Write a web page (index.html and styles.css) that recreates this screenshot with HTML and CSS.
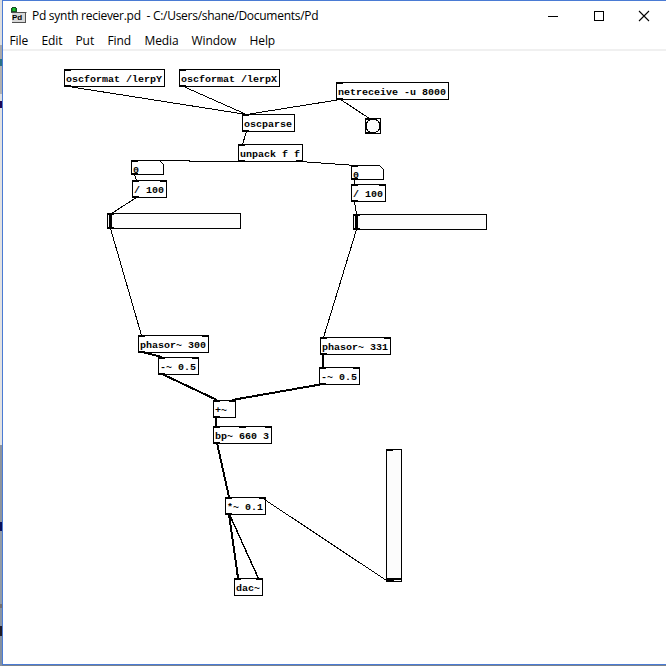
FILE: index.html
```
<!DOCTYPE html>
<html lang="en">
<head>
<meta charset="utf-8">
<title>Pd synth reciever.pd</title>
<link rel="stylesheet" href="styles.css">
<script src="patch.js" defer></script>
</head>
<body>
<div class="desktop"></div>
<main class="window">
  <header class="titlebar">
    <svg class="app-icon" width="16" height="17" viewBox="0 0 16 17">
      <rect x="1" y="5" width="14" height="11" fill="#d8d8d8"/>
      <path d="M1 0h4v1h1v4H0V1h1z" fill="#174b22"/>
      <rect x="1.5" y="1" width="3" height="3" fill="#18c52c"/>
      <path d="M0 5.500h15.500M14.500 5v11M1 15.500h14" stroke="#505050" fill="none"/>
      <text class="icon-text" x="1" y="13">Pd</text>
    </svg>
    <h1 class="title">Pd synth reciever.pd&nbsp; - C:/Users/shane/Documents/Pd</h1>
    <div class="controls">
      <svg width="12" height="12"><path d="M1 6.500h10"/></svg>
      <svg width="12" height="12"><path d="M1.500 1.500h9v9h-9z"/></svg>
      <svg class="close" width="12" height="12"><path d="M1 1L11 11M11 1L1 11"/></svg>
    </div>
  </header>
  <nav class="menu">
    <span class="m-file">File</span><span class="m-edit">Edit</span><span class="m-put">Put</span><span class="m-find">Find</span><span class="m-media">Media</span><span class="m-window">Window</span><span>Help</span>
  </nav>
  <svg class="patch" id="patch" width="663" height="613" viewBox="3 51 663 613"></svg>
</main>
</body>
</html>
```
FILE: styles.css
```
* { box-sizing: border-box; }
body {
  margin: 0;
  width: 666px;
  height: 666px;
  overflow: hidden;
  display: flex;
  background: #7b838c;
}
.desktop {
  width: 2px;
  flex: none;
  background: linear-gradient(#dedede 0 45px, #a8a8a8 45px 59px, #2a7186 59px 66px, #b0b0b0 66px 94px, #dedede 94px 101px, #1c0759 101px 108px, #e2e2e2 108px 445px, #8d949d 445px 522px, #08105c 522px 531px, #929ba6 531px 604px, #77706c 604px 608px, #8994a3 608px 626px, #201c28 626px 636px, #8490a0 636px);
}
.window {
  flex: 1;
  height: 665px;
  display: flex;
  flex-direction: column;
  background: #fff;
  border: 1px solid #4a7bd4;
  border-right: 0;
  font-family: "Open Sans", sans-serif;
  color: #000;
}
.titlebar {
  height: 29px;
  display: flex;
  align-items: center;
  padding: 0 16px 0 8px;
}
.app-icon { flex: none; }
.icon-text { font: bold 8px "Liberation Sans", sans-serif; }
.title {
  margin: 0 0 0 5px;
  font-size: 12px;
  font-weight: 400;
  line-height: 16px;
  white-space: nowrap;
  letter-spacing: -0.27px;
}
.controls { margin-left: auto; display: flex; gap: 33.5px; }
.controls svg { fill: none; stroke: #000; shape-rendering: crispEdges; }
.controls .close { shape-rendering: auto; stroke-width: 1.1; }
.menu {
  height: 21px;
  display: flex;
  padding: 3px 0 0 6.5px;
  font-size: 12px;
  line-height: 16px;
  letter-spacing: -0.1px;
  border-bottom: 2px solid #f0f0f0;
}
.m-file { width: 32px; }
.m-edit { width: 34px; }
.m-put { width: 32px; }
.m-find { width: 37px; }
.m-media { width: 47px; }
.m-window { width: 58px; }
.patch { display: block; flex: none; }
.patch text { font: bold 9px "Liberation Mono", monospace; }
.cord, .shape { stroke: #000; fill: none; shape-rendering: crispEdges; }
.signal { stroke-width: 2; }
.shape { fill: #fff; }
.widget { fill: #fcfcfc; }
.iolet, .knob { fill: #000; shape-rendering: crispEdges; }
.notch { fill: #fff; shape-rendering: crispEdges; }
```
FILE: patch.js
```
const patch = document.getElementById('patch');

function add(tag, attrs, text) {
  const el = document.createElementNS('http://www.w3.org/2000/svg', tag);
  for (const key in attrs) el.setAttribute(key, attrs[key]);
  if (text) el.textContent = text;
  patch.appendChild(el);
}

function addLabel(x, y, label) {
  add('text', { x, y, textLength: label.length * 6, lengthAdjust: 'spacingAndGlyphs' }, label);
}

function iolets(x, y, w, count) {
  for (let i = 0; i < count; i++) {
    const offset = count > 1 ? Math.round((w - 7) * i / (count - 1)) : 0;
    add('rect', { class: 'iolet', x: x + offset, y, width: 7, height: 2 });
  }
}

// label, left, top, width, inlets, outlets
const objects = [
  ['oscformat /lerpY', 64, 69, 101, 1, 1],
  ['oscformat /lerpX', 179, 69, 101, 1, 1],
  ['netreceive -u 8000', 336, 82, 113, 1, 1],
  ['oscparse', 242, 114, 53, 1, 1],
  ['unpack f f', 238, 144, 65, 1, 2],
  ['/ 100', 132, 180, 35, 2, 1],
  ['/ 100', 351, 184, 35, 2, 1],
  ['phasor~ 300', 138, 335, 71, 2, 1],
  ['-~ 0.5', 158, 357, 41, 2, 1],
  ['phasor~ 331', 320, 337, 71, 2, 1],
  ['-~ 0.5', 319, 367, 41, 2, 1],
  ['+~', 213, 400, 23, 2, 1],
  ['bp~ 660 3', 213, 426, 59, 3, 1],
  ['*~ 0.1', 225, 497, 41, 2, 1],
  ['dac~', 234, 578, 29, 2, 0]
];
for (const [label, x, y, w, ins, outs] of objects) {
  add('rect', { class: 'shape', x: x + 0.5, y: y + 0.5, width: w - 1, height: 17 });
  iolets(x, y, w, ins);
  iolets(x, y + 16, w, outs);
  addLabel(x + 2, y + 13, label);
}

// number boxes
for (const [x, y] of [[131, 160], [351, 165]]) {
  add('path', { class: 'shape', d: `M${x + 0.5} ${y + 0.5}h28l4 4v10h-32z` });
  iolets(x, y, 33, 1);
  iolets(x, y + 13, 33, 1);
  addLabel(x + 2, y + 13, '0');
}

// bang
add('rect', { class: 'shape widget', x: 365.5, y: 118.5, width: 15, height: 15 });
add('circle', { class: 'shape widget', cx: 373, cy: 126, r: 7 });
iolets(365, 118, 16, 1);
iolets(365, 132, 16, 1);

// horizontal sliders
for (const [x, y] of [[107, 213], [353, 214]]) {
  add('rect', { class: 'shape widget', x: x + 0.5, y: y + 0.5, width: 133, height: 15 });
  iolets(x, y, 134, 1);
  iolets(x, y + 14, 134, 1);
  add('rect', { class: 'knob', x: x + 2, y, width: 3, height: 16 });
}

// vertical slider
add('rect', { class: 'shape widget', x: 386.5, y: 449.5, width: 15, height: 132 });
iolets(386, 449, 16, 1);
iolets(386, 580, 16, 1);
add('rect', { class: 'knob', x: 386, y: 578, width: 16, height: 3 });
add('rect', { class: 'notch', x: 394, y: 580, width: 7, height: 1 });

// x1, y1, x2, y2, stroke width
const cords = [
  [68, 86, 246, 114, 1], [183, 86, 246, 114, 1], [340, 99, 246, 114, 1], [340, 99, 369, 118, 1],
  [246, 131, 242, 144, 1], [242, 161, 188, 161, 1], [189, 160, 135, 160, 1], [299, 161, 355, 165, 1],
  [134, 174, 136, 180, 1], [354, 179, 354, 184, 1], [136, 197, 111, 213, 1], [354, 201, 356, 214, 1],
  [110, 228, 141, 335, 1], [356, 229, 323, 337, 1],
  [142, 352, 162, 357, 2], [323, 354, 323, 367, 2], [162, 374, 217, 400, 2], [323, 384, 232, 400, 2],
  [216, 417, 216, 426, 2], [217, 443, 229, 497, 2],
  [229, 514, 238, 578, 2], [229, 514, 258, 578, 1.4], [386, 580, 264, 499, 1]
];
for (const [x1, y1, x2, y2, width] of cords) {
  const d = width === 2 ? 0 : 0.5;
  add('line', {
    class: width === 2 ? 'cord signal' : 'cord',
    'stroke-width': width,
    x1: x1 + d, y1: y1 + d, x2: x2 + d, y2: y2 + d
  });
}
```
